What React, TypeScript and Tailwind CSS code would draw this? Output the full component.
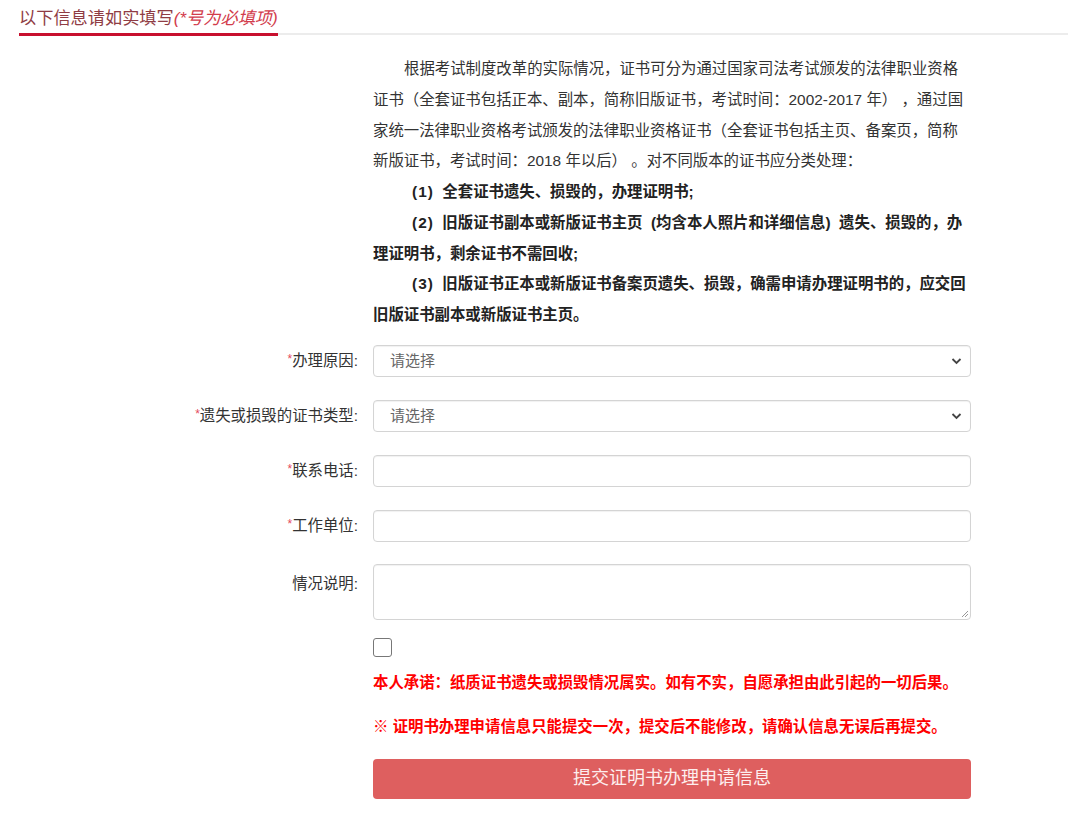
import React from "react";

const font = "font-['Liberation_Sans','Noto_Sans_CJK_SC',sans-serif]";

function Label({ text, required }: { text: string; required?: boolean }) {
  return (
    <div className="w-[362px] shrink-0 text-right text-[15.4px] text-[#333] pr-[4px]">
      {required && <span className="text-[#e4495b] text-[12px] align-[3px]">*</span>}
      {text}:
    </div>
  );
}

function Chevron() {
  return (
    <svg width="11" height="8" viewBox="0 0 11 8" className="absolute right-[4px] top-1/2 -translate-y-1/2 mr-[4px]">
      <path d="M1.5 2 L5.5 6 L9.5 2" fill="none" stroke="#444" strokeWidth="1.8" />
    </svg>
  );
}

function SelectBox() {
  return (
    <div className="relative w-[598px] h-[32px] rounded-[4px] border border-[#d4d4d4] bg-white shadow-[inset_0_1px_1px_rgba(0,0,0,0.06)] flex items-center pl-[16px] text-[15px] text-[#666]">
      请选择
      <Chevron />
    </div>
  );
}

function TextBox() {
  return (
    <div className="w-[598px] h-[32px] rounded-[4px] border border-[#d4d4d4] bg-white shadow-[inset_0_1px_1px_rgba(0,0,0,0.06)]" />
  );
}

export default function App() {
  return (
    <div className={`${font} w-[1080px] h-[840px] bg-white text-[#333]`}>
      {/* section heading */}
      <div className="pt-[6px] pl-[19px] pr-[12px]">
        <div className="flex items-end">
          <div className="border-b-[3px] border-[#c8102e] pb-[3px] text-[17.2px] leading-[24px] text-[#8f3c44]">
            以下信息请如实填写<span className="italic text-[#d23c4c]">(*号为必填项)</span>
          </div>
          <div className="flex-1 h-[2px] mb-[1px] bg-[#ececec]" />
        </div>
      </div>

      {/* notice */}
      <div className="ml-[373px] w-[598px] mt-[18px] text-[15.4px] leading-[30.75px] text-[#333] whitespace-nowrap">
        <p className="indent-[31px]">
          根据考试制度改革的实际情况，证书可分为通过国家司法考试颁发的法律职业资格
          <br />
          证书（全套证书包括正本、副本，简称旧版证书，考试时间：2002-2017 年） ，通过国
          <br />
          家统一法律职业资格考试颁发的法律职业资格证书（全套证书包括主页、备案页，简称
          <br />
          新版证书，考试时间：2018 年以后） 。对不同版本的证书应分类处理：
        </p>
        <p className="indent-[39px] font-bold text-[#222]">
          <span className="tracking-[1px]">(1)</span>&nbsp; 全套证书遗失、损毁的，办理证明书;
        </p>
        <p className="indent-[39px] font-bold text-[#222]">
          <span className="tracking-[1px]">(2)</span>&nbsp; 旧版证书副本或新版证书主页 &nbsp;(均含本人照片和详细信息) &nbsp;遗失、损毁的，办
          <br />
          理证明书，剩余证书不需回收;
        </p>
        <p className="indent-[39px] font-bold text-[#222]">
          <span className="tracking-[1px]">(3)</span>&nbsp; 旧版证书正本或新版证书备案页遗失、损毁，确需申请办理证明书的，应交回
          <br />
          旧版证书副本或新版证书主页。
        </p>
      </div>

      {/* form */}
      <div className="mt-[14px] flex flex-col gap-[23px]">
        <div className="flex items-center gap-[11px]">
          <Label text="办理原因" required />
          <SelectBox />
        </div>
        <div className="flex items-center gap-[11px]">
          <Label text="遗失或损毁的证书类型" required />
          <SelectBox />
        </div>
        <div className="flex items-center gap-[11px]">
          <Label text="联系电话" required />
          <TextBox />
        </div>
        <div className="flex items-center gap-[11px]">
          <Label text="工作单位" required />
          <TextBox />
        </div>
        <div className="flex items-start gap-[11px] -mt-[1px]">
          <div className="pt-[8px]">
            <Label text="情况说明" />
          </div>
          <div className="relative w-[598px] h-[56px] rounded-[4px] border border-[#d4d4d4] bg-white shadow-[inset_0_1px_1px_rgba(0,0,0,0.06)]">
            <svg width="9" height="9" viewBox="0 0 9 9" className="absolute right-[1px] bottom-[1px]">
              <path d="M8 2 L2 8 M8 5 L5 8" stroke="#999" strokeWidth="1" />
            </svg>
          </div>
        </div>
      </div>

      <div className="ml-[373px] w-[598px]">
        <div className="mt-[18px] w-[19px] h-[19px] rounded-[3px] border border-[#777] bg-white" />
        <p className="mt-[15px] text-[15.4px] leading-[22px] font-bold text-[#f00]">
          本人承诺：纸质证书遗失或损毁情况属实。如有不实，自愿承担由此引起的一切后果。
        </p>
        <p className="mt-[22px] text-[15.4px] leading-[22px] font-bold text-[#f00]">
          ※ 证明书办理申请信息只能提交一次，提交后不能修改，请确认信息无误后再提交。
        </p>
        <button className="mt-[21px] w-[598px] h-[40px] rounded-[4px] bg-[#de5f5f] text-[18px] text-[#fdeeee] flex items-center justify-center">
          提交证明书办理申请信息
        </button>
      </div>
    </div>
  );
}
